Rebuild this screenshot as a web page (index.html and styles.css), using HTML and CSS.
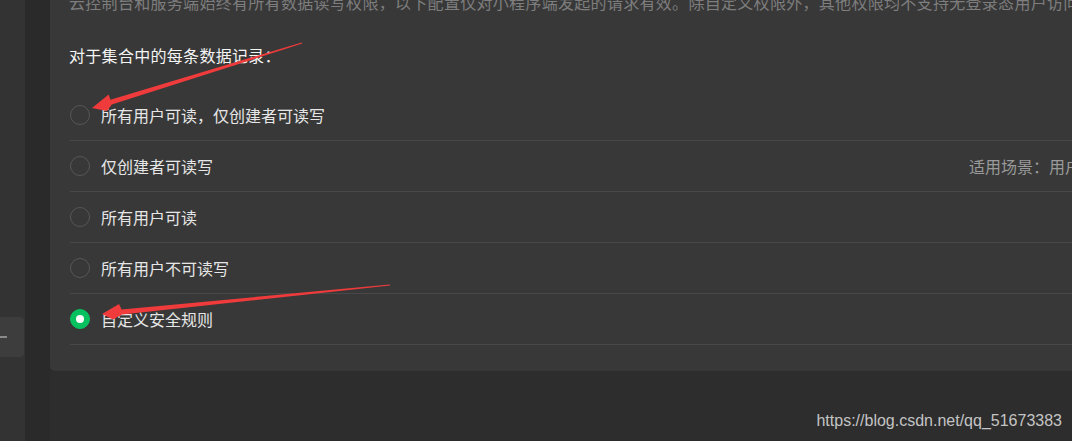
FILE: index.html
```html
<html>
	<head>
		<meta charset="utf-8">
		<link rel="stylesheet" href="styles.css">
	</head>
	<body>
		<div class="app">
			<aside class="side">
				<div class="side-btn"><span class="side-btn-bar"></span></div>
			</aside>
			<div class="rail"></div>
			<main class="main">
				<section class="panel">
					<p class="panel-desc">云控制台和服务端始终有所有数据读写权限，以下配置仅对小程序端发起的请求有效。除自定义权限外，其他权限均不支持无登录态用户访问</p>
					<p class="panel-title">对于集合中的每条数据记录：</p>
					<ul class="perm-list">
						<li class="perm-item"><span class="radio"></span><span class="perm-label">所有用户可读，仅创建者可读写</span></li>
						<li class="perm-item"><span class="radio"></span><span class="perm-label">仅创建者可读写</span><span class="perm-note">适用场景：用户个人设置、用户订单管理</span></li>
						<li class="perm-item"><span class="radio"></span><span class="perm-label">所有用户可读</span></li>
						<li class="perm-item"><span class="radio"></span><span class="perm-label">所有用户不可读写</span></li>
						<li class="perm-item"><span class="radio checked"></span><span class="perm-label">自定义安全规则</span></li>
					</ul>
				</section>
			</main>
		</div>
		<svg class="marks" width="1072" height="441" viewBox="0 0 1072 441">
			<polygon points="301.8,42.4 110.4,99.7 108.7,94.5 92,108 107,111 111.8,104.5 302.2,43.6"/>
			<polygon points="389.9,284.4 121.6,309.5 119,304 102,314 113,319.5 122.1,314.5 390.1,285.6"/>
		</svg>
		<div class="watermark">https://blog.csdn.net/qq_51673383</div>
	</body>
</html>
```

FILE: styles.css
```css
html,body{
	margin:0;
	padding:0;
	height:100%;
	overflow:hidden;
	background:#2d2d2d;
	font-family:"Noto Sans CJK SC","Microsoft YaHei",sans-serif;
}
.app{
	display:flex;
	height:100%;
}
.side{
	width:25px;
	flex-shrink:0;
	background:#333333;
	padding-top:317px;
	box-sizing:border-box;
}
.side .side-btn{
	width:24px;
	height:40px;
	background:#3d3d3d;
	border-radius:0 4px 4px 0;
	display:flex;
	align-items:center;
}
.side .side-btn-bar{
	display:block;
	width:7px;
	height:2px;
	background:#8a8a8a;
}
.rail{
	width:25px;
	flex-shrink:0;
	background:#2a2a2a;
}
.main{
	flex:1;
	overflow:hidden;
	background:#2d2d2d;
}
.main .panel{
	width:1250px;
	background:#383838;
	border-radius:0 0 0 5px;
	padding:0 20px 26px 19px;
	box-sizing:border-box;
}
.panel .panel-desc{
	margin:-9px 0 0 0;
	font-size:16px;
	line-height:22px;
	letter-spacing:0.3px;
	color:#7e7e7e;
	white-space:nowrap;
}
.panel .panel-title{
	margin:30px 0 0 0;
	font-size:16px;
	line-height:24px;
	letter-spacing:0.3px;
	color:#f4f4f4;
}
.panel .perm-list{
	list-style:none;
	margin:23px 0 0 1px;
	padding:0;
}
.perm-list .perm-item{
	display:flex;
	align-items:center;
	height:50px;
	border-bottom:1px solid #484848;
	font-size:16px;
	color:#e6e6e6;
	white-space:nowrap;
}
.perm-item .radio{
	width:20px;
	height:20px;
	border:1px solid #575757;
	border-radius:50%;
	box-sizing:border-box;
	margin-right:11px;
	flex-shrink:0;
	display:flex;
	align-items:center;
	justify-content:center;
}
.perm-item .radio.checked{
	background:#07c160;
	border-color:#07c160;
}
.perm-item .radio.checked:after{
	content:"";
	width:8px;
	height:8px;
	border-radius:50%;
	background:#fff;
}
.perm-item .perm-note{
	margin-left:auto;
	width:311px;
	color:#9a9a9a;
}
.marks{
	position:absolute;
	left:0;
	top:0;
	pointer-events:none;
}
.marks polygon{
	fill:#ef3b3b;
}
.watermark{
	position:absolute;
	right:10px;
	bottom:10px;
	font-family:"Liberation Sans",Arial,sans-serif;
	font-size:16px;
	line-height:20px;
	color:#c4c4c4;
}
```
